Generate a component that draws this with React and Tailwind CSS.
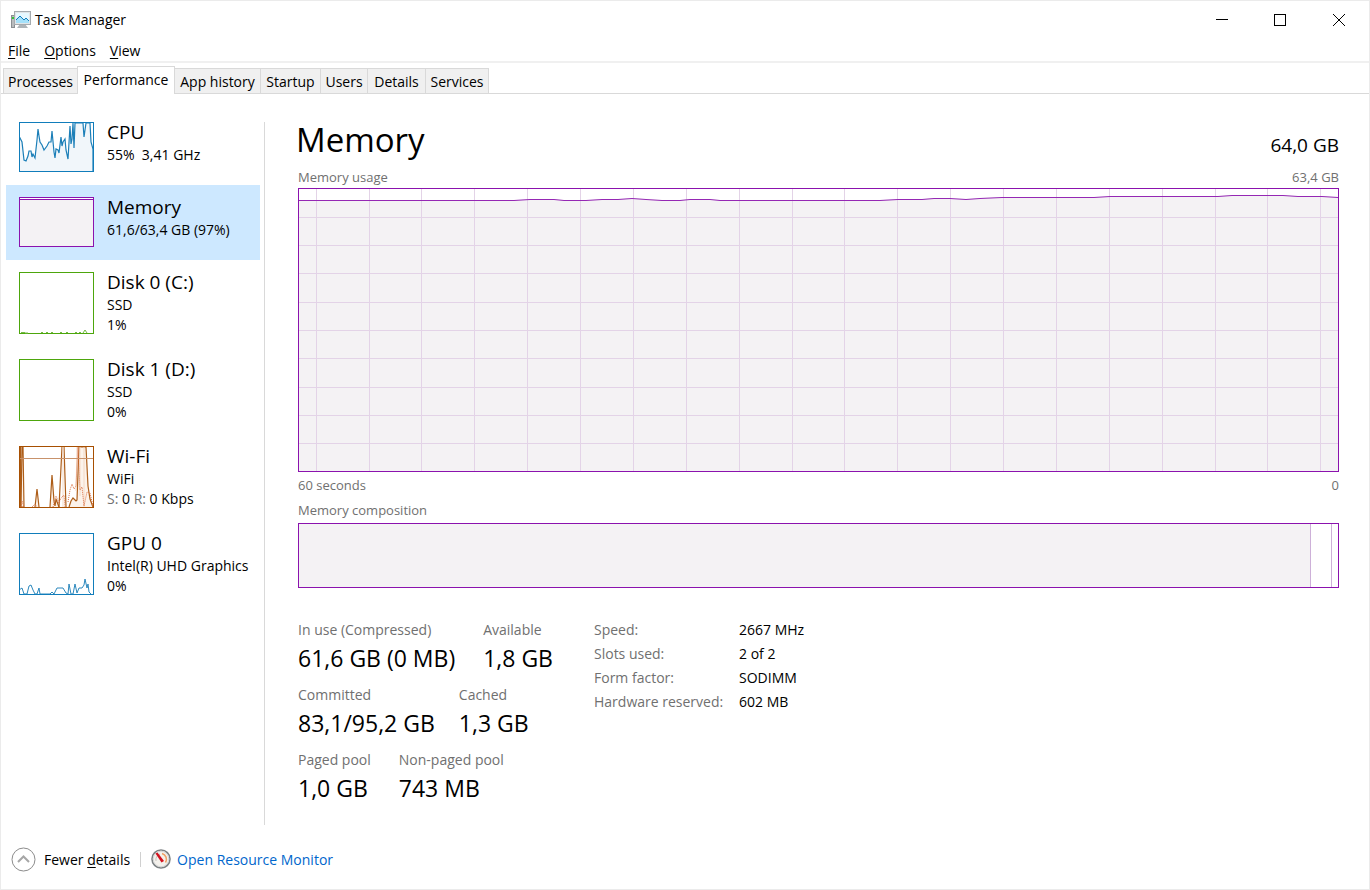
import clsx from "clsx";

const menus = ["File", "Options", "View"];

const tabs = [
  { name: "Processes", width: "w-[74px]" },
  { name: "Performance", width: "w-[98px]" },
  { name: "App history", width: "w-[86px]" },
  { name: "Startup", width: "w-[60px]" },
  { name: "Users", width: "w-[47px]" },
  { name: "Details", width: "w-[58px]" },
  { name: "Services", width: "w-[63px]" },
];

const specs = [
  ["Speed:", "2667 MHz"],
  ["Slots used:", "2 of 2"],
  ["Form factor:", "SODIMM"],
  ["Hardware reserved:", "602 MB"],
];

const verticals = [
  18, 71, 123, 176, 229, 282, 335, 388, 441, 494, 546, 599, 652, 705, 758, 811,
  864, 917, 969, 1022,
];
const horizontals = [29, 57, 85, 114, 142, 170, 199, 227, 255];

const usageLine =
  "0,12 216,12 232,11 256,11 266,12 288,12 304,11 320,11 334,10 348,11 364,12 382,12 392,11 412,11 422,12 582,12 600,11 624,11 636,10 652,10 668,11 682,10 704,9 796,9 812,8 920,8 934,7 985,7 1000,8 1024,8 1040,9";

const AppIcon = () => (
  <svg width="20" height="18" viewBox="0 0 20 18" aria-hidden="true">
    <rect x="0.5" y="4.5" width="3" height="12" fill="#b9bcbe" stroke="#8b8f92" />
    <rect x="1" y="6" width="2" height="2" fill="#35c435" />
    <path d="M9 13h5l3 4H6z" fill="#aeb4b8" />
    <rect x="3.5" y="0.5" width="16" height="13" fill="#e1e5e7" stroke="#a5abaf" />
    <rect x="5" y="2" width="13" height="10" fill="#e6f8ff" />
    <path d="M5 8l4-3 4 4 2-2 3 3v2H5z" fill="#a5e1fa" />
    <path d="M5 9l4-4 4 4 2-2 3 3" fill="none" stroke="#1580bd" />
  </svg>
);

const CpuGraph = () => (
  <svg width="75" height="50" viewBox="0 0 75 50" aria-hidden="true">
    <rect width="75" height="50" fill="#fff" />
    <path
      d="M0 14L3 20L5 38L7 39L9 34L10 29L12 29L13 35L14 32L16 36L18 18L19 7L20 14L21 20L23 23L25 28L28 24L30 20L32 20L33 9L35 30L36 36L37 27L39 28L40 31L42 15L43 24L44 20L46 17L47 28L49 37L51 4L52 22L53 17L54 1L55 26L56 1L64 1L65 15L67 1L71 1L72 20L74 27V50H0Z"
      fill="#f1f6fa"
      stroke="#1c7fb8"
      strokeWidth="1.2"
    />
    <rect x="0.5" y="0.5" width="74" height="49" fill="none" stroke="#117dbb" />
  </svg>
);

const MemoryGraph = () => (
  <svg width="75" height="50" viewBox="0 0 75 50" aria-hidden="true">
    <rect x="0.5" y="0.5" width="74" height="49" fill="#f4f2f4" stroke="#8b12ae" />
    <path d="M1 1.5h73" stroke="#fff" />
    <path d="M1 2.5h73" stroke="#8b12ae" />
  </svg>
);

const DiskGraph = ({ active }) => (
  <svg width="75" height="62" viewBox="0 0 75 62" aria-hidden="true">
    <rect x="0.5" y="0.5" width="74" height="61" fill="#fff" stroke="#4da60c" />
    {active && (
      <path
        d="M2 60.5h4M6 61h3M22 60.5h2M27 60.5h2M32 60.5h2M41 60.5h2M47 60.5h2M56 60.5h2M60 60.5h2M64 61l2-3 2 3"
        fill="none"
        stroke="#73b944"
      />
    )}
  </svg>
);

const WifiGraph = () => (
  <svg width="75" height="62" viewBox="0 0 75 62" aria-hidden="true">
    <rect width="75" height="62" fill="#fff" />
    <g fill="#fcf3eb" stroke="#ad5d18" strokeWidth="1.2">
      <path d="M1.5 61V1" />
      <path d="M3 1L2 61L5 61L4 1" />
      <path d="M16 61L18 43L20 61" />
      <path d="M31 61L33 29L35 55L36 60L37 53L40 61" />
      <path d="M40 61L43 1M45 1L47 61" />
      <path d="M50 61L52 55L54 52L57 55L58 54L60 1H67L69 40L71 53L74 61" />
    </g>
    <path d="M57 45L58 1M61 50V1M44 61V1M65 61V1" stroke="#f3d9c6" />
    <path
      d="M2 61L3 55L5 61M13 61L16 58L18 61M34 61L37 50L40 57L42 52L45 49L46 61M49 56L51 44L53 38L55 43L57 40L59 1L61 44L63 41L65 60L68 46L71 47L74 60"
      fill="none"
      stroke="#dd7143"
      strokeDasharray="1 1"
    />
    <path d="M1 12.5h73" stroke="#c8926b" />
    <rect x="0.5" y="0.5" width="74" height="61" fill="none" stroke="#a74f01" />
  </svg>
);

const GpuGraph = () => (
  <svg width="75" height="62" viewBox="0 0 75 62" aria-hidden="true">
    <rect width="75" height="62" fill="#fff" />
    <path
      d="M0 57L3 55L5 61L8 61L10 53L12 52L14 57L16 61L18 61L20 55L21 61H31L33 59L35 61L38 55L44 55L47 60L49 61L50 51L52 61L54 61L56 51L58 60L60 55L63 55L65 52L66 46L68 55L69 51L70 59L72 61"
      fill="none"
      stroke="#2c88bd"
    />
    <rect x="0.5" y="0.5" width="74" height="61" fill="none" stroke="#117dbb" />
  </svg>
);

const GaugeIcon = () => (
  <svg width="20" height="20" viewBox="0 0 20 20" aria-hidden="true">
    <circle cx="10" cy="10" r="9" fill="#f4f1ec" stroke="#7d8284" strokeWidth="1.6" />
    <circle cx="10" cy="10" r="7.8" fill="none" stroke="#d4d6d6" />
    <path d="M5 12a6 6 0 0 1 4-7" fill="none" stroke="#c9c5bf" />
    <path d="M11 4.5a6 6 0 0 1 3.5 9" fill="none" stroke="#f0a064" strokeWidth="1.5" />
    <path d="M4.500 4.500l2-1 6.500 8.500-2.500 1.500z" fill="#d3121f" />
  </svg>
);

const devices = [
  { name: "CPU", lines: ["55%  3,41 GHz"], graph: <CpuGraph /> },
  { name: "Memory", lines: ["61,6/63,4 GB (97%)"], graph: <MemoryGraph />, selected: true },
  { name: "Disk 0 (C:)", lines: ["SSD", "1%"], graph: <DiskGraph active /> },
  { name: "Disk 1 (D:)", lines: ["SSD", "0%"], graph: <DiskGraph /> },
  {
    name: "Wi-Fi",
    lines: [
      "WiFi",
      <>
        <span className="text-[#707070]">S:</span> 0 <span className="text-[#707070]">R:</span> 0 Kbps
      </>,
    ],
    graph: <WifiGraph />,
  },
  { name: "GPU 0", lines: ["Intel(R) UHD Graphics", "0%"], graph: <GpuGraph /> },
];

const DeviceItem = ({ device }) => (
  <button
    className={clsx(
      "flex items-start gap-[13px] pl-[13px] py-3 text-left",
      device.selected && "bg-[#cde8ff]"
    )}
  >
    <span className="shrink-0 pb-px">{device.graph}</span>
    <span className="flex flex-col whitespace-pre">
      <span className="text-[19px] leading-5">{device.name}</span>
      <span className="flex flex-col pt-[3px] leading-5">
        {device.lines.map((line, i) => (
          <span key={i}>{line}</span>
        ))}
      </span>
    </span>
  </button>
);

const Stat = ({ label, value }) => (
  <div>
    <dt className="leading-5 text-[#707070]">{label}</dt>
    <dd className="pt-0.5 text-[23px] leading-8">{value}</dd>
  </div>
);

const UsageGraph = () => (
  <svg
    className="block w-full h-0 grow min-h-[200px] border border-[#8b12ae]"
    viewBox="1 1 1039 282"
    preserveAspectRatio="none"
    role="img"
    aria-label="Memory usage"
  >
    <polygon points={`${usageLine} 1040,284 0,284`} fill="#f4f2f4" />
    <g stroke="#e3d3e7" shapeRendering="crispEdges">
      {verticals.map((x) => (
        <line key={x} x1={x + 0.5} x2={x + 0.5} y1="0" y2="284" />
      ))}
      {horizontals.map((y) => (
        <line key={y} x1="0" x2="1041" y1={y + 0.5} y2={y + 0.5} />
      ))}
    </g>
    <polyline points={usageLine} transform="translate(0 0.5)" fill="none" stroke="#9528b4" />
  </svg>
);

const App = () => {
  return (
    <div className="min-h-screen flex flex-col bg-white border border-[#ebebeb] font-['Open_Sans',sans-serif] text-[14px] text-black">
      {/* Title bar */}
      <header className="flex justify-between h-[37px]">
        <h1 className="flex items-center gap-1 pl-[10px]">
          <AppIcon />
          Task Manager
        </h1>
        <div className="flex">
          <button aria-label="Minimize" className="w-[58px] flex items-center justify-center">
            <svg width="12" height="12" viewBox="0 0 12 12">
              <path d="M0 5.5h12" stroke="#000" />
            </svg>
          </button>
          <button aria-label="Maximize" className="w-[58px] flex items-center justify-center">
            <svg width="12" height="12" viewBox="0 0 12 12">
              <rect x="0.5" y="0.5" width="11" height="11" fill="none" stroke="#000" />
            </svg>
          </button>
          <button aria-label="Close" className="w-[60px] flex items-center justify-center">
            <svg width="12" height="12" viewBox="0 0 12 12">
              <path d="M0 0l12 12M12 0L0 12" stroke="#000" />
            </svg>
          </button>
        </div>
      </header>

      <nav className="flex gap-[14px] h-[25px] pl-[7px] border-b-2 border-[#f0f0f0]">
        {menus.map((menu) => (
          <button key={menu} className="leading-[26px]">
            <span className="underline underline-offset-2">{menu[0]}</span>
            {menu.slice(1)}
          </button>
        ))}
      </nav>

      {/* Tabs */}
      <div role="tablist" className="flex items-end h-[31px] pl-[2px] pt-[3px] border-b border-[#d9d9d9]">
        {tabs.map(({ name, width }) => {
          const active = name === "Performance";
          return (
            <button
              key={name}
              role="tab"
              aria-selected={active}
              className={clsx(
                "border-[#d9d9d9] whitespace-nowrap",
                width,
                active
                  ? "h-7 -mb-px pb-0.5 border-x border-t bg-white"
                  : "h-[25px] border-t border-r bg-[#f0f0f0] first:border-l first:border-r-0"
              )}
            >
              {name}
            </button>
          );
        })}
      </div>

      <div className="flex flex-1 pt-4">
        {/* Device list */}
        <aside className="w-[259px] shrink-0 flex flex-col pl-[5px]">
          {devices.map((device) => (
            <DeviceItem key={device.name} device={device} />
          ))}
        </aside>

        <main className="flex-1 flex flex-col mt-3 ml-1 pl-[33px] pr-[30px] border-l border-[#d9d9d9] min-w-0">
          <div className="flex justify-between items-end">
            <h2 className="-ml-0.5 text-[33px] leading-9">Memory</h2>
            <span className="text-[19px] leading-[26px]">64,0 GB</span>
          </div>
          <div className="flex justify-between pt-[9px] pb-px text-[13px] leading-5 text-[#707070]">
            <span>Memory usage</span>
            <span>63,4 GB</span>
          </div>
          <UsageGraph />
          <div className="flex justify-between pt-[3px] text-[13px] leading-5 text-[#707070]">
            <span>60 seconds</span>
            <span>0</span>
          </div>
          <div className="pt-[5px] pb-[3px] text-[13px] leading-5 text-[#707070]">
            Memory composition
          </div>
          <div className="flex h-[65px] border border-[#8b12ae]">
            <div className="flex-1 bg-[#f4f2f4] border-r border-[#cdb0d8]" />
            <div className="w-[21px] border-r border-[#cdb0d8]" />
            <div className="w-[6px]" />
          </div>

          <div className="flex pt-8 pb-[21px]">
            <div className="flex flex-col gap-[11px] w-[296px]">
              <dl className="flex gap-7">
                <Stat label="In use (Compressed)" value="61,6 GB (0 MB)" />
                <Stat label="Available" value="1,8 GB" />
              </dl>
              <dl className="flex gap-6">
                <Stat label="Committed" value="83,1/95,2 GB" />
                <Stat label="Cached" value="1,3 GB" />
              </dl>
              <dl className="flex gap-7">
                <Stat label="Paged pool" value="1,0 GB" />
                <Stat label="Non-paged pool" value="743 MB" />
              </dl>
            </div>
            <table className="self-start -mt-0.5 leading-6">
              <tbody>
                {specs.map(([label, value]) => (
                  <tr key={label}>
                    <th scope="row" className="w-[145px] text-left font-normal text-[#707070]">
                      {label}
                    </th>
                    <td>{value}</td>
                  </tr>
                ))}
              </tbody>
            </table>
          </div>
        </main>
      </div>

      <footer className="flex items-center h-16 pl-[10px] pt-1">
        <button className="flex items-center gap-2">
          <svg width="25" height="25" viewBox="0 0 25 25" aria-hidden="true">
            <circle cx="12.5" cy="12.5" r="11.5" fill="none" stroke="#8c8c8c" />
            <path d="M7 15l5.500-5.500L18 15" fill="none" stroke="#a6a6a6" strokeWidth="2" />
          </svg>
          <span>
            Fewer <span className="underline underline-offset-2">d</span>etails
          </span>
        </button>
        <span className="ml-[10px] mr-[10px] h-[15px] border-l border-[#d0d0d0]" />
        <a href="#resource-monitor" className="flex items-center gap-1.5 text-[#0066cc]">
          <GaugeIcon />
          Open Resource Monitor
        </a>
      </footer>
    </div>
  );
};

export default App;
